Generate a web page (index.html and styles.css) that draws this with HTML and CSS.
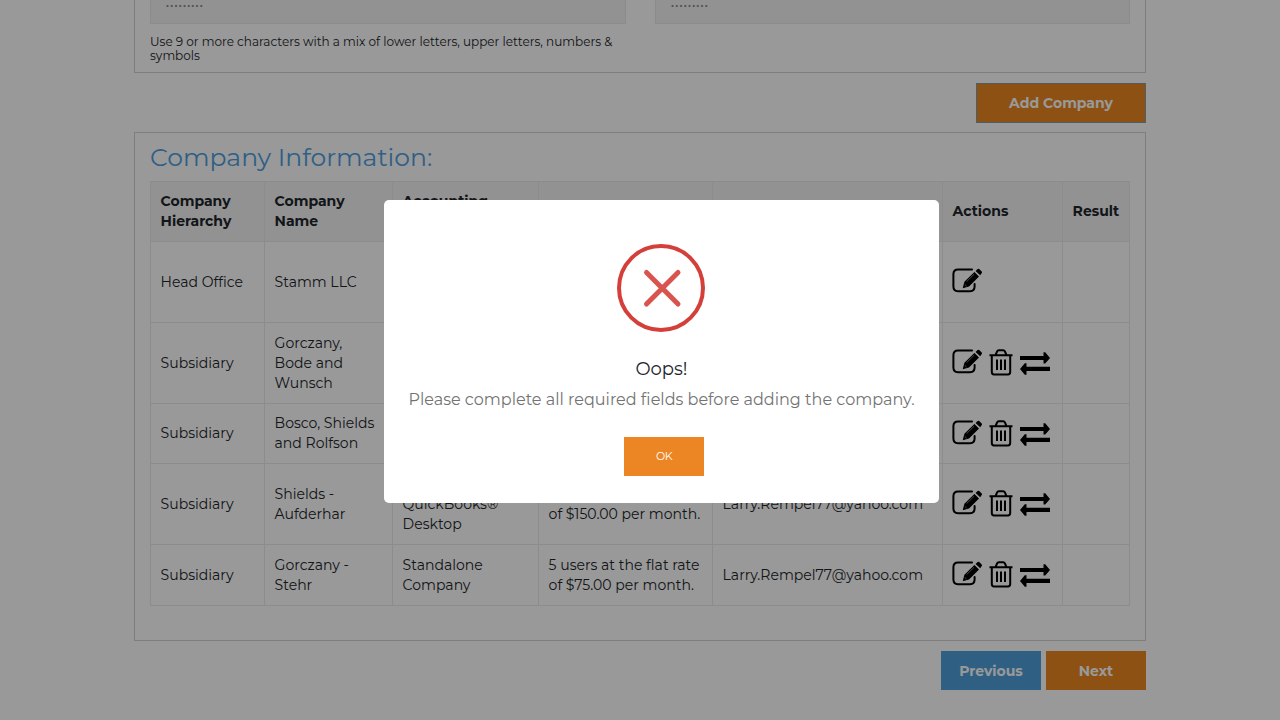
FILE: index.html
```html
<!DOCTYPE html>
<html lang="en">
<head>
<meta charset="utf-8">
<title>Company Information</title>
<link rel="stylesheet" href="styles.css">
</head>
<body>
<svg class="defs" width="0" height="0" aria-hidden="true">
  <symbol id="edit" viewBox="0 0 30 26">
    <path d="M20 1.6H6Q1.4 1.6 1.4 6.2V18.6Q1.4 23.2 6 23.2H18Q22.6 23.2 22.6 18.6V16" fill="none" stroke="#000" stroke-width="2" stroke-linecap="round"/>
    <path d="M10.7 20.2L12.4 13.8L22.4 4.1L27 8.6L17 18.4ZM23.6 2.9L25.6 1Q26.4 .3 27.2 1L29.7 3.4Q30.4 4.2 29.7 5L28.2 7.3Z"/>
    <path d="M14.6 13.6L22 6.3M12.8 16.4L14.6 18.1" fill="none" stroke="#999" stroke-width=".8"/>
  </symbol>
  <symbol id="trash" viewBox="0 0 24 27">
    <path d="M.5 6.3H23.5M6.6 6L8.1 2.4Q8.6 1.2 9.8 1.2H14.2Q15.4 1.2 15.9 2.4L17.4 6M2.8 6.5V23Q2.8 25.4 5 25.4H19Q21.2 25.4 21.2 23V6.5M8 10.5V21M12 10.5V21M16 10.5V21" fill="none" stroke="#000" stroke-width="2"/>
  </symbol>
  <symbol id="swap" viewBox="0 0 30 24">
    <path d="M0 4.1H23.5V.3H25.2L30 6L25.2 11.6H23.5V8.1H0ZM30 14.7H6.5V11.2H4.8L0 17L4.8 22.8H6.5V18.9H30Z"/>
  </symbol>
</svg>
<main class="page">
  <section class="account">
    <div class="field"><div class="input">.........</div><p class="hint">Use 9 or more characters with a mix of lower letters, upper letters, numbers &amp;<br>symbols</p></div>
    <div class="field"><div class="input">.........</div></div>
  </section>
  <div class="add-row"><button class="btn add">Add Company</button></div>
  <section class="panel">
    <h2>Company Information:</h2>
    <table>
      <colgroup><col class="c1"><col class="c2"><col class="c3"><col class="c4"><col class="c5"><col class="c6"><col class="c7"></colgroup>
      <tr class="head"><th>Company<br>Hierarchy</th><th>Company<br>Name</th><th>Accounting<br>&nbsp;</th><th></th><th></th><th>Actions</th><th>Result</th></tr>
      <tr class="tall"><td>Head Office</td><td>Stamm LLC</td><td></td><td></td><td></td><td><div class="icons"><svg class="edit"><use href="#edit"/></svg></div></td><td></td></tr>
      <tr class="tall"><td>Subsidiary</td><td>Gorczany,<br>Bode and<br>Wunsch</td><td></td><td></td><td></td><td><div class="icons"><svg class="edit"><use href="#edit"/></svg><svg class="trash"><use href="#trash"/></svg><svg class="swap"><use href="#swap"/></svg></div></td><td></td></tr>
      <tr class="short"><td>Subsidiary</td><td>Bosco, Shields<br>and Rolfson</td><td></td><td></td><td></td><td><div class="icons"><svg class="edit"><use href="#edit"/></svg><svg class="trash"><use href="#trash"/></svg><svg class="swap"><use href="#swap"/></svg></div></td><td></td></tr>
      <tr class="tall"><td>Subsidiary</td><td>Shields -<br>Aufderhar</td><td>&nbsp;<br>QuickBooks®<br>Desktop</td><td>&nbsp;<br>of $150.00 per month.</td><td>Larry.Rempel77@yahoo.com</td><td><div class="icons"><svg class="edit"><use href="#edit"/></svg><svg class="trash"><use href="#trash"/></svg><svg class="swap"><use href="#swap"/></svg></div></td><td></td></tr>
      <tr class="last"><td>Subsidiary</td><td>Gorczany -<br>Stehr</td><td>Standalone<br>Company</td><td>5 users at the flat rate<br>of $75.00 per month.</td><td>Larry.Rempel77@yahoo.com</td><td><div class="icons"><svg class="edit"><use href="#edit"/></svg><svg class="trash"><use href="#trash"/></svg><svg class="swap"><use href="#swap"/></svg></div></td><td></td></tr>
    </table>
  </section>
  <div class="nav-row"><button class="btn prev">Previous</button><button class="btn next">Next</button></div>
</main>
<div class="overlay">
  <div class="modal" role="dialog">
    <svg class="error" viewBox="0 0 88 88"><circle cx="44" cy="44" r="42" fill="none" stroke="#d43f3a" stroke-width="4"/><path d="M29.5 28.5L61 60M61 28.5L29.5 60" stroke="#d9534f" stroke-width="5" stroke-linecap="round"/></svg>
    <h3>Oops!</h3>
    <p class="message">Please complete all required fields before adding the company.</p>
    <button class="ok">OK</button>
  </div>
</div>
</body>
</html>
```

FILE: styles.css
```css
* { box-sizing: border-box; }
body { margin: 0; height: 720px; overflow: hidden; background: #fff; color: #212529; font: 400 14px/20px Montserrat, Inter, "Open Sans", sans-serif; }
h2, h3, p { margin: 0; font-weight: 400; white-space: nowrap; }
button { border: 0; padding: 0; font-family: inherit; color: #fff; }
.defs { position: absolute; }
.page { width: 1012px; margin: 0 auto; }
.account { height: 73px; border: 1px solid #d3d3d3; border-top: 0; padding: 0 15px; display: grid; grid-template-columns: 476px 475px; justify-content: space-between; }
.input { height: 24px; border: 1px solid #e8e8e8; border-top: 0; background: #f3f3f3; padding: 0 0 0 15px; font-size: 12px; font-weight: 600; line-height: 6px; letter-spacing: 1.3px; color: #888; }
.hint { margin-top: 11px; font-size: 12.02px; line-height: 14px; }
.add-row { height: 59px; padding-top: 10px; display: flex; justify-content: flex-end; }
.btn { height: 39px; font-size: 14px; font-weight: 700; background: #ec8722; }
.add { width: 170px; height: 40px; border: 1px solid #849bab; }
.panel { height: 509px; border: 1px solid #d3d3d3; padding: 9px 15px 0; }
h2 { height: 39px; font-size: 25.05px; line-height: 30px; color: #4f9fdf; }
table { width: 979px; table-layout: fixed; border-collapse: collapse; }
.c1 { width: 114px; } .c2 { width: 128px; } .c3 { width: 146px; } .c4 { width: 174px; } .c5 { width: 230px; } .c6 { width: 120px; } .c7 { width: 67px; }
th, td { border: 1px solid #e9e9e9; padding: 0 0 1px 9.6px; text-align: left; vertical-align: middle; white-space: nowrap; font-size: 14.04px; }
th { background: #f3f3f6; font-weight: 700; }
.head { height: 60px; } .tall { height: 81px; } .short { height: 60px; } .last { height: 61px; }
.icons { display: flex; height: 27px; align-items: flex-start; margin-left: -.6px; }
.edit { width: 30px; height: 26px; }
.trash { width: 24px; height: 27px; margin-left: 7px; }
.swap { width: 30px; height: 24px; margin: 3px 0 0 7px; }
.nav-row { padding-top: 10px; display: flex; justify-content: flex-end; gap: 5px; }
.prev, .next { width: 100px; }
.prev { background: #509fdd; }
.overlay { position: absolute; inset: 0; background: rgba(0, 0, 0, .4); padding: 200px 0 0 384px; }
.modal { width: 555px; height: 303px; background: #fff; border-radius: 5px; display: flex; flex-direction: column; align-items: center; padding-top: 44px; }
.error { width: 88px; height: 88px; margin-right: 1px; }
h3 { margin-top: 24px; font-size: 18px; line-height: 26px; color: #212529; }
.message { margin-top: 7px; font-size: 16.05px; line-height: 20px; color: #737373; }
.ok { width: 80px; height: 39px; margin: 28px 0 0 5px; background: #ec8624; font-size: 11px; line-height: 39px; letter-spacing: -.5px; }
```
